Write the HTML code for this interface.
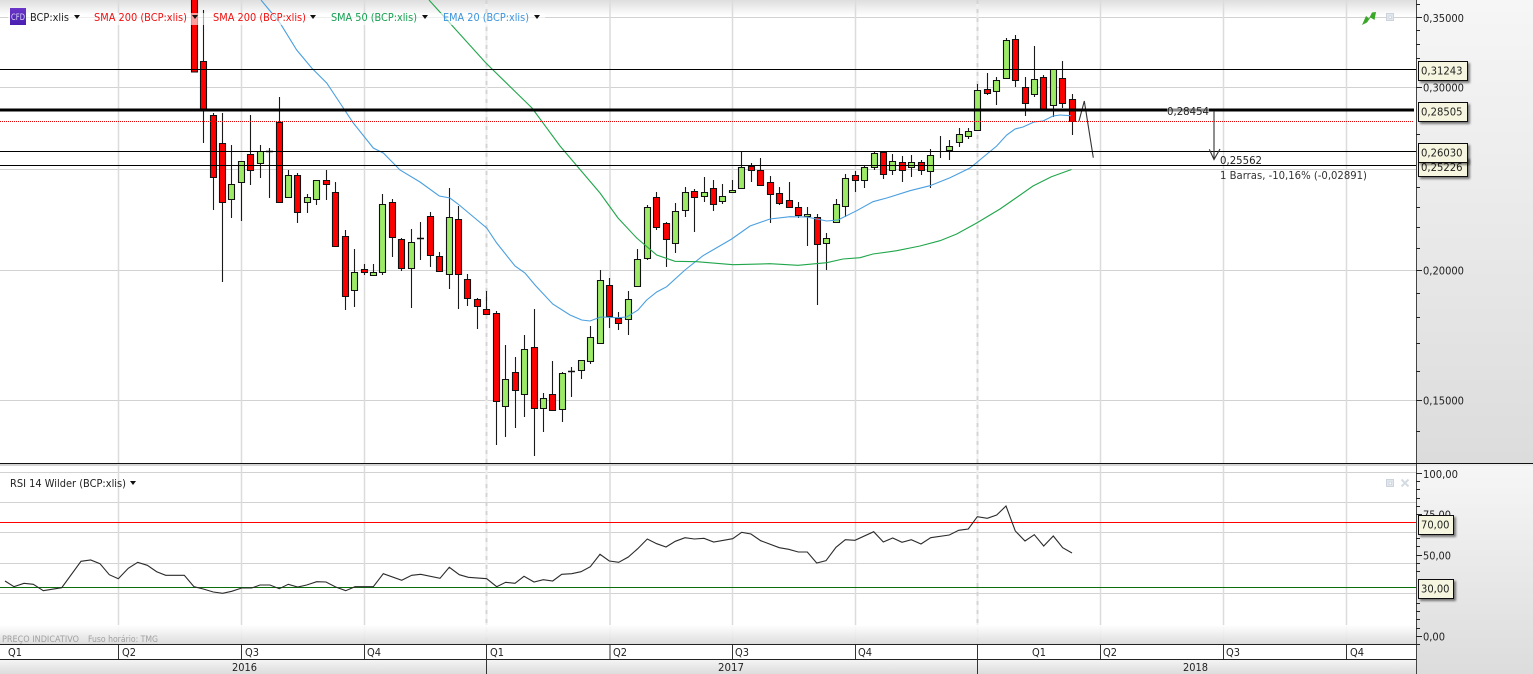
<!DOCTYPE html>
<html><head><meta charset="utf-8"><title>BCP:xlis</title>
<style>
html,body{margin:0;padding:0;width:1533px;height:674px;overflow:hidden;background:#fff}
svg{display:block}
text{font-family:"DejaVu Sans","Liberation Sans",sans-serif;font-size:11px;fill:#222}
</style></head><body>
<svg width="1533" height="674" viewBox="0 0 1533 674" xmlns="http://www.w3.org/2000/svg">
<defs>
<linearGradient id="t" x1="0" y1="0" x2="0" y2="1"><stop offset="0" stop-color="#dedede"/><stop offset="1" stop-color="#fff"/></linearGradient>
<linearGradient id="b" x1="0" y1="0" x2="0" y2="1"><stop offset="0" stop-color="#fff"/><stop offset="1" stop-color="#dadada"/></linearGradient>
<linearGradient id="a" x1="0" y1="0" x2="0" y2="1"><stop offset="0" stop-color="#f6f6f6"/><stop offset="1" stop-color="#dcdcdc"/></linearGradient>
<linearGradient id="y" x1="0" y1="0" x2="0" y2="1"><stop offset="0" stop-color="#f4f4f4"/><stop offset="1" stop-color="#dcdcdc"/></linearGradient>
<linearGradient id="p" x1="0" y1="0" x2="0" y2="1"><stop offset="0" stop-color="#6a35c8"/><stop offset="1" stop-color="#4a1fb0"/></linearGradient>
<filter id="s" x="-10%" y="-10%" width="130%" height="140%"><feDropShadow dx="2" dy="2" stdDeviation="1" flood-color="#000" flood-opacity=".5"/></filter>
</defs>

<!-- panels -->
<rect x="0" y="0" width="1417" height="16" fill="url(#t)"/>
<rect x="1417" y="0" width="116" height="463" fill="url(#a)"/>
<rect x="1417" y="466" width="116" height="208" fill="url(#a)"/>

<!-- horizontal grid -->
<path fill="none" stroke="#d2d2d2" stroke-width="1" d="M0 17.5H1416M0 87.5H1416M0 169.5H1416M0 270.5H1416M0 400.5H1416M0 472.5H1416M0 502.5H1416M0 532.5H1416M0 563.5H1416M0 593.5H1416"/>
<!-- vertical grid -->
<path fill="none" stroke="#dcdcdc" stroke-width="1.5" d="M118.5 0V463M241.5 0V463M364.5 0V463M610 0V463M732.5 0V463M855.5 0V463M1100.5 0V463M1223.5 0V463M1346.5 0V463M118.5 466V644M241.5 466V644M364.5 466V644M610 466V644M732.5 466V644M855.5 466V644M1100.5 466V644M1223.5 466V644M1346.5 466V644"/>
<path fill="none" stroke="#efefef" stroke-width="2" d="M486.5 0V463M977.5 0V463M486.5 466V644M977.5 466V644"/>
<path fill="none" stroke="#d4d4d4" stroke-width="2" stroke-dasharray="4 5" d="M486.5 0V463M977.5 0V463M486.5 466V644M977.5 466V644"/>

<!-- wicks -->
<path fill="none" stroke="#1a1a1a" stroke-width="1.1" d="M203.5 10V143M213.5 113V210M222.5 113V282M231.5 145V218M241.5 161V221M250.5 115V185M260.5 145V178M269.5 148V198M279.5 97V202M288.5 170V198M297.5 173V223M307.5 194V213M316.5 180V205M326.5 170V200M335.5 182V246M345.5 230V310M354.5 249V307M364.5 264V275M373.5 264V276M382.5 194V275M392.5 199V257M401.5 238V271M411.5 229V308M420.5 222V260M430.5 212V267M439.5 252V272M449.5 188V289M458.5 206V309M467.5 274V306M477.5 298V329M486.5 291V315M496.5 311V445M505.5 345V437M515.5 357V428M524.5 335V417M534.5 309V456M543.5 393V432M552.5 361V411M562.5 372V422M571.5 367V397M581.5 360V379M590.5 326V364M600.5 270V344M609.5 278V328M618.5 312V330M628.5 291V335M637.5 249V287M647.5 205V260M656.5 192V230M666.5 222V267M675.5 203V253M685.5 187V217M694.5 189V232M704.5 177V202M713.5 180V211M722.5 184V204M732.5 180V193M741.5 152V189M751.5 163V182M760.5 158V186M770.5 176V223M779.5 187V205M789.5 182V208M798.5 202V218M807.5 207V246M817.5 214V305M826.5 233V270M836.5 199V222M845.5 174V217M855.5 171V192M864.5 166V188M874.5 152V170M883.5 151V179M892.5 154V175M902.5 156V182M911.5 155V177M921.5 160V175M930.5 149V188M940.5 136V158M949.5 140V160M959.5 128V147M968.5 128V139M977.5 84V130M987.5 73V95M996.5 77V105M1006.5 38V78M1015.5 35V87M1025.5 77V116M1034.5 46V97M1043.5 75V109M1053.5 69V117M1062.5 61V108M1072.5 94V135"/>
<!-- dojis -->
<path fill="none" stroke="#111" stroke-width="1.6" d="M266 151.5h7M417 238.5h7M568 371.5h7"/>
<!-- red bodies -->
<path fill="#f00" stroke="#111" stroke-width="1.1" d="M191.5-5h6v77h-6zM200.5 61.5h6v49h-6zM210.5 115.5h6v62h-6zM219.5 143.5h6v59h-6zM247.5 154.5h6v16h-6zM276.5 122.5h6v80h-6zM294.5 175.5h6v37h-6zM323.5 180.5h6v4h-6zM332.5 192.5h6v54h-6zM342.5 236.5h6v60h-6zM361.5 269.5h6v3h-6zM389.5 202.5h6v35h-6zM398.5 239.5h6v29h-6zM427.5 216.5h6v39h-6zM436.5 256.5h6v15h-6zM455.5 219.5h6v55h-6zM464.5 279.5h6v19h-6zM474.5 299.5h6v7h-6zM483.5 309.5h6v5h-6zM493.5 313.5h6v88h-6zM512.5 372.5h6v18h-6zM531.5 347.5h6v61h-6zM549.5 394.5h6v16h-6zM606.5 285.5h6v31h-6zM615.5 318.5h6v5h-6zM653.5 197.5h6v30h-6zM663.5 223.5h6v16h-6zM691.5 191.5h6v6h-6zM710.5 188.5h6v16h-6zM748.5 166.5h6v4h-6zM757.5 170.5h6v15h-6zM767.5 182.5h6v12h-6zM776.5 193.5h6v10h-6zM786.5 200.5h6v7h-6zM795.5 207.5h6v8h-6zM814.5 217.5h6v27h-6zM852.5 175.5h6v5h-6zM880.5 152.5h6v22h-6zM899.5 162.5h6v8h-6zM918.5 162.5h6v8h-6zM984.5 89.5h6v4h-6zM1012.5 39.5h6v41h-6zM1022.5 87.5h6v16h-6zM1040.5 77.5h6v32h-6zM1059.5 78.5h6v25h-6zM1069.5 99.5h6v22h-6z"/>
<!-- green bodies -->
<path fill="#9cea66" stroke="#111" stroke-width="1.1" d="M228.5 184.5h6v15h-6zM238.5 161.5h6v21h-6zM257.5 151.5h6v12h-6zM285.5 175.5h6v22h-6zM304.5 197.5h6v5h-6zM313.5 180.5h6v19h-6zM351.5 272.5h6v18h-6zM370.5 272.5h6v3h-6zM379.5 204.5h6v68h-6zM408.5 242.5h6v26h-6zM446.5 217.5h6v57h-6zM502.5 379.5h6v27h-6zM521.5 349.5h6v45h-6zM540.5 398.5h6v10h-6zM559.5 373.5h6v36h-6zM578.5 360.5h6v10h-6zM587.5 337.5h6v24h-6zM597.5 280.5h6v63h-6zM625.5 299.5h6v20h-6zM634.5 259.5h6v27h-6zM644.5 207.5h6v51h-6zM672.5 211.5h6v32h-6zM682.5 192.5h6v18h-6zM701.5 192.5h6v4h-6zM719.5 196.5h6v5h-6zM729.5 190.5h6v2h-6zM738.5 167.5h6v21h-6zM804.5 214.5h6v2h-6zM823.5 238.5h6v5h-6zM833.5 204.5h6v18h-6zM842.5 178.5h6v28h-6zM861.5 167.5h6v13h-6zM871.5 153.5h6v14h-6zM889.5 161.5h6v9h-6zM908.5 162.5h6v5h-6zM927.5 155.5h6v16h-6zM946.5 146.5h6v4h-6zM956.5 134.5h6v8h-6zM965.5 131.5h6v5h-6zM974.5 90.5h6v40h-6zM993.5 80.5h6v11h-6zM1003.5 40.5h6v38h-6zM1031.5 79.5h6v15h-6zM1050.5 69.5h6v36h-6z"/>

<!-- moving averages -->
<path fill="none" stroke="#4a9fe0" stroke-width="1.1" d="M261 0L280 23L296.7 50L311.7 68L326.7 83L343.3 108L353.3 123L373.3 148L383.3 153L400 170L420 182L439.3 196L450 198L458 204L486.7 228L496.7 243L515 266L525 273L535 285L552.7 304L570 315L581.7 320L590 321L600.7 317L618 317.7L626.7 317L638 310L646.7 300L656.7 292L666.7 286.7L685 270L703 255.7L731.7 239L750 226L770 219L790 216.7L806.7 217L826.7 221L838 220L856.7 210.7L873 201.7L886.7 198L910 190.7L930 185.7L950 177.7L970 168L996.7 146L1006.7 135L1015 129L1023 127L1034 122L1043 121L1053 116L1060 115L1070.7 115.7"/>
<path fill="none" stroke="#1fa64a" stroke-width="1.1" d="M429 0L485 62L491 68L532 108L560 146L600 193L618 218L636.7 238L656.7 255L675 261.3L696.7 261.7L733 264.7L770 263.7L798 265.3L826.7 262.7L843 259L860 257.7L873 254L896.7 250.7L920 246L940 240.7L956.7 234L976.7 223L1000 209L1013 200L1033 186L1051.4 176.7L1071.5 169.5"/>
<!-- drawn trend -->
<path fill="none" stroke="#333" stroke-width="1.1" d="M1079 121L1084.3 101L1093.3 157.7"/>

<!-- horizontal price lines -->
<path fill="none" stroke="#000" stroke-width="1" d="M0 69.5H1416M0 151.5H1416M0 165.5H1416"/>
<path fill="none" stroke="#000" stroke-width="3" d="M0 110H1414"/>
<path fill="none" stroke="#e00000" stroke-width="1" stroke-dasharray="1 1" d="M0 121.5H1413"/>

<!-- measuring arrow -->
<path fill="none" stroke="#333" stroke-width="1.1" d="M1214 111V159M1209.3 149.3L1214 159.5L1220 149"/>
<rect x="1167" y="104" width="42" height="13" fill="#fff" fill-opacity=".55"/>
<text x="1167" y="115" textLength="42" lengthAdjust="spacingAndGlyphs" style="fill:#222">0,28454</text>
<text x="1220" y="164" textLength="42" lengthAdjust="spacingAndGlyphs" style="fill:#222">0,25562</text>
<text x="1220" y="179" textLength="147" lengthAdjust="spacingAndGlyphs" style="fill:#333">1 Barras, -10,16% (-0,02891)</text>

<!-- legend -->
<rect x="8" y="13" width="537" height="12" fill="#fff" fill-opacity=".62"/>
<rect x="10" y="8" width="16" height="17" fill="url(#p)"/>
<text x="11" y="20" textLength="14" lengthAdjust="spacingAndGlyphs" style="font-size:9px;fill:#d9d9f5">CFD</text>
<text x="30" y="21" textLength="39" lengthAdjust="spacingAndGlyphs">BCP:xlis</text>
<path fill="#111" d="M74 15h6l-3 4z"/>
<text x="94" y="21" textLength="93" lengthAdjust="spacingAndGlyphs" style="fill:#f01010">SMA 200 (BCP:xlis)</text>
<path fill="#111" d="M192 15h6l-3 4z"/>
<text x="213" y="21" textLength="93" lengthAdjust="spacingAndGlyphs" style="fill:#f01010">SMA 200 (BCP:xlis)</text>
<path fill="#111" d="M310 15h6l-3 4z"/>
<text x="331" y="21" textLength="86" lengthAdjust="spacingAndGlyphs" style="fill:#14a050">SMA 50 (BCP:xlis)</text>
<path fill="#111" d="M422 15h6l-3 4z"/>
<text x="443" y="21" textLength="86" lengthAdjust="spacingAndGlyphs" style="fill:#3d94dc">EMA 20 (BCP:xlis)</text>
<path fill="#111" d="M534 15h6l-3 4z"/>

<!-- top right icons -->
<path fill="#3aa72a" d="M1362 25L1366 16L1369 18.5L1372 12.5L1376 12L1374.5 20L1370.5 17.5L1367 22.5z"/>
<rect x="1386.5" y="13.5" width="7" height="7" fill="#e2e7ee" stroke="#ccd3dc"/>
<rect x="1389" y="16" width="2.5" height="2.5" fill="#fff" stroke="#c2cad4" stroke-width=".6"/>

<!-- price axis -->
<rect x="1416" y="0" width="1" height="463" fill="#444"/>
<path fill="none" stroke="#222" stroke-width="1" d="M1416 4.5h4M1416 17.5h6M1416 30.5h4M1416 44.5h4M1416 58.5h4M1416 87.5h6M1416 134.5h4M1416 187.5h4M1416 207.5h4M1416 227.5h4M1416 248.5h4M1416 270.5h6M1416 293.5h4M1416 317.5h4M1416 343.5h4M1416 371.5h4M1416 400.5h6M1416 431.5h4"/>
<text x="1423" y="22" textLength="41" lengthAdjust="spacingAndGlyphs">0,35000</text>
<text x="1423" y="91.5" textLength="41" lengthAdjust="spacingAndGlyphs">0,30000</text>
<text x="1423" y="274.5" textLength="41" lengthAdjust="spacingAndGlyphs">0,20000</text>
<text x="1423" y="404.5" textLength="41" lengthAdjust="spacingAndGlyphs">0,15000</text>

<!-- price tags -->
<g fill="#f6f6e0" stroke="#111" stroke-width="1" filter="url(#s)">
<rect x="1418.5" y="157.5" width="49" height="19"/>
</g>
<text x="1421" y="171" textLength="41.5" lengthAdjust="spacingAndGlyphs">0,25226</text>
<g fill="#f6f6e0" stroke="#111" stroke-width="1" filter="url(#s)">
<rect x="1418.5" y="61.5" width="49" height="19"/>
<rect x="1418.5" y="102.5" width="49" height="19"/>
<rect x="1418.5" y="143.5" width="49" height="19"/>
</g>
<text x="1421" y="74.5" textLength="41.5" lengthAdjust="spacingAndGlyphs">0,31243</text>
<text x="1421" y="115.5" textLength="41.5" lengthAdjust="spacingAndGlyphs">0,28505</text>
<text x="1421" y="156.5" textLength="41.5" lengthAdjust="spacingAndGlyphs">0,26030</text>

<!-- panel separator -->
<rect x="0" y="463" width="1533" height="1" fill="#111"/>
<rect x="0" y="464" width="1416" height="2" fill="#d4d4d4"/>
<rect x="1417" y="464" width="116" height="2" fill="#ededed"/>

<!-- RSI -->
<path fill="none" stroke="#f00" stroke-width="1" d="M0 522.5H1416"/>
<path fill="none" stroke="#0b6e0b" stroke-width="1" d="M0 587.5H1416"/>
<path fill="none" stroke="#2b2b2b" stroke-width="1.1" d="M5 581L14 586.7L24 583.3L33.3 584.3L43.3 590.7L61.7 587.7L81 561.3L90.7 560L100 563.7L109.3 574.7L118.3 578.7L128.3 568.3L137.7 562.3L147.3 565.3L156.7 571.7L165.7 575.3L184.3 575.3L194 586.7L203.3 589L213.3 592L222.7 593.3L231.7 591.3L241.7 588L251.7 588L260 585L270 585L279.3 588.7L288.3 584.3L297.7 587L306.7 585L316.7 581.7L326 582L335.7 587L345.7 590.7L355 586.7L373.3 586.7L383.3 573.7L401.7 580.3L411.7 575.3L420.7 574.3L440 578.3L449.3 567.3L459.3 574.7L468.3 577.3L486.7 578.7L496.7 586.7L505.7 582.3L515 583.3L524 576.3L534 582L543.3 579.7L552.7 581L561.7 574.3L571.7 573.7L581 571.7L590.3 566.7L600 554.3L609.3 561L618.7 562.3L628.3 557L637.7 548.7L647.3 539L656.7 543.7L666 547L675.3 541.3L685 537.7L694.3 539L704 538.3L713.7 542L732.7 538.7L741.7 532.3L751 534L760.7 540.7L779.3 547.7L788.7 549.3L798.3 552L807.3 552L816.7 563L826 560.7L836 547.3L845.3 539.7L855 540.3L873.7 531.7L883.3 542L892.7 538L902 542.3L911.3 539.7L921 544L930.7 537.7L949.3 535L958.7 530.3L968.3 529L977.3 516.7L987.3 518.3L996.7 515L1006 506L1015.3 531L1025 541L1034.3 534.7L1043.7 546L1053.3 536L1062.7 547.7L1072 553"/>
<text x="10" y="487" textLength="116" lengthAdjust="spacingAndGlyphs">RSI 14 Wilder (BCP:xlis)</text>
<path fill="#111" d="M130 481h6l-3 4z"/>
<rect x="1386.5" y="479.5" width="7" height="7" fill="#e2e7ee" stroke="#ccd3dc"/>
<rect x="1389" y="482" width="2.5" height="2.5" fill="#fff" stroke="#c2cad4" stroke-width=".6"/>
<path fill="none" stroke="#d5dbe3" stroke-width="2" d="M1401.5 479.5l7 7M1408.5 479.5l-7 7"/>

<!-- RSI axis -->
<rect x="1416" y="464" width="1" height="210" fill="#444"/>
<path fill="none" stroke="#222" stroke-width="1" d="M1416 473.5h6M1416 481.5h4M1416 489.5h4M1416 498.5h4M1416 506.5h4M1416 514.5h6M1416 538.5h4M1416 546.5h4M1416 555.5h6M1416 563.5h4M1416 571.5h4M1416 603.5h4M1416 611.5h4M1416 619.5h4M1416 628.5h4M1416 636.5h6M1416 644.5h4"/>
<text x="1423" y="478" textLength="35" lengthAdjust="spacingAndGlyphs">100,00</text>
<text x="1423" y="518.5" textLength="28" lengthAdjust="spacingAndGlyphs">75,00</text>
<text x="1423" y="559.5" textLength="28" lengthAdjust="spacingAndGlyphs">50,00</text>
<text x="1423" y="640.5" textLength="22" lengthAdjust="spacingAndGlyphs">0,00</text>
<g fill="#f6f6e0" stroke="#111" stroke-width="1" filter="url(#s)">
<rect x="1418.5" y="515.5" width="35" height="19"/>
<rect x="1418.5" y="579.5" width="35" height="19"/>
</g>
<text x="1421" y="528.5" textLength="28.5" lengthAdjust="spacingAndGlyphs">70,00</text>
<text x="1421" y="592.5" textLength="28.5" lengthAdjust="spacingAndGlyphs">30,00</text>

<!-- bottom -->
<rect x="0" y="625" width="1416" height="19" fill="url(#b)" fill-opacity=".9"/>
<text x="2" y="642" textLength="77" lengthAdjust="spacingAndGlyphs" style="font-size:9px;fill:#a0a0a0">PREÇO INDICATIVO</text>
<text x="88" y="642" textLength="70" lengthAdjust="spacingAndGlyphs" style="font-size:9px;fill:#a0a0a0">Fuso horário: TMG</text>
<rect x="0" y="644" width="1416" height="15" fill="#fff"/>
<rect x="0" y="660" width="1416" height="14" fill="url(#y)"/>
<path fill="none" stroke="#222" stroke-width="1" d="M0 644.5H1416M0 659.5H1416"/>
<path fill="none" stroke="#333" stroke-width="1" d="M118.5 645V659M241.5 645V659M364.5 645V659M486.5 645V674M610 645V659M732.5 645V659M855.5 645V659M977.5 645V674M1100.5 645V659M1223.5 645V659M1346.5 645V659"/>
<g>
<text x="8" y="656" textLength="14" lengthAdjust="spacingAndGlyphs">Q1</text>
<text x="122" y="656" textLength="14" lengthAdjust="spacingAndGlyphs">Q2</text>
<text x="245" y="656" textLength="14" lengthAdjust="spacingAndGlyphs">Q3</text>
<text x="367" y="656" textLength="14" lengthAdjust="spacingAndGlyphs">Q4</text>
<text x="490" y="656" textLength="14" lengthAdjust="spacingAndGlyphs">Q1</text>
<text x="613" y="656" textLength="14" lengthAdjust="spacingAndGlyphs">Q2</text>
<text x="735" y="656" textLength="14" lengthAdjust="spacingAndGlyphs">Q3</text>
<text x="858" y="656" textLength="14" lengthAdjust="spacingAndGlyphs">Q4</text>
<text x="1032" y="656" textLength="14" lengthAdjust="spacingAndGlyphs">Q1</text>
<text x="1103" y="656" textLength="14" lengthAdjust="spacingAndGlyphs">Q2</text>
<text x="1226" y="656" textLength="14" lengthAdjust="spacingAndGlyphs">Q3</text>
<text x="1350" y="656" textLength="14" lengthAdjust="spacingAndGlyphs">Q4</text>
<text x="232" y="671" textLength="25" lengthAdjust="spacingAndGlyphs">2016</text>
<text x="718" y="671" textLength="26" lengthAdjust="spacingAndGlyphs">2017</text>
<text x="1183" y="671" textLength="25" lengthAdjust="spacingAndGlyphs">2018</text>
</g>
</svg>
</body></html>
